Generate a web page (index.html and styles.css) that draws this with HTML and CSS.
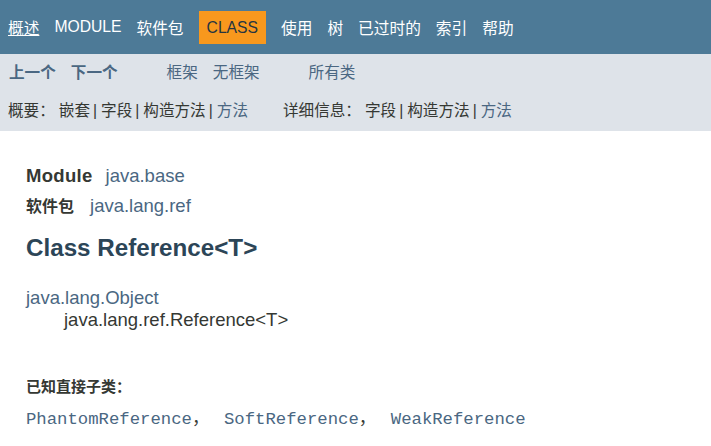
FILE: index.html
```html
<!DOCTYPE html>
<html lang="zh-CN">
<head>
<meta charset="utf-8">
<title>Reference (Java SE 10 &amp; JDK 10 )</title>
<link rel="stylesheet" href="styles.css">
</head>
<body>
<header class="top-nav">
  <ul class="nav-list">
    <li><a class="under" href="#">概述</a></li>
    <li><a href="#">MODULE</a></li>
    <li><a href="#">软件包</a></li>
    <li class="current">CLASS</li>
    <li><a href="#">使用</a></li>
    <li><a href="#">树</a></li>
    <li><a href="#">已过时的</a></li>
    <li><a href="#">索引</a></li>
    <li><a href="#">帮助</a></li>
  </ul>
</header>
<div class="sub-nav">
  <div class="sub-row row-one">
    <ul class="group prev-next">
      <li>上一个</li>
      <li>下一个</li>
    </ul>
    <ul class="group frames">
      <li><a href="#">框架</a></li>
      <li><a href="#">无框架</a></li>
    </ul>
    <ul class="group all-classes">
      <li><a href="#">所有类</a></li>
    </ul>
  </div>
  <div class="sub-row row-two">
    <ul class="sub-list summary">
      <li class="lead">概要：</li>
      <li>嵌套<span class="bar">|</span></li>
      <li>字段<span class="bar">|</span></li>
      <li>构造方法<span class="bar">|</span></li>
      <li><a href="#">方法</a></li>
    </ul>
    <ul class="sub-list detail">
      <li class="lead">详细信息：</li>
      <li>字段<span class="bar">|</span></li>
      <li>构造方法<span class="bar">|</span></li>
      <li><a href="#">方法</a></li>
    </ul>
  </div>
</div>
<main class="content">
  <div class="sub-title"><span class="label spaced">Module</span><a href="#">java.base</a></div>
  <div class="sub-title"><span class="label cjk">软件包</span><a href="#">java.lang.ref</a></div>
  <h2 class="title">Class Reference&lt;T&gt;</h2>
  <div class="inheritance">
    <a href="#">java.lang.Object</a>
    <div class="inherit-child">java.lang.ref.Reference&lt;T&gt;</div>
  </div>
  <dl class="subclasses">
    <dt>已知直接子类：</dt>
    <dd><code><a href="#">PhantomReference</a><span class="sep">，</span><a href="#">SoftReference</a><span class="sep">，</span><a href="#">WeakReference</a></code></dd>
  </dl>
</main>
</body>
</html>
```
FILE: styles.css
```css
body {
  margin: 0;
  font-family: "Liberation Sans", "Noto Sans CJK SC", sans-serif;
  color: #353833;
  background: #ffffff;
}

a {
  color: #4a6782;
  text-decoration: none;
}

ul {
  list-style: none;
  margin: 0;
  padding: 0;
}

/* top navigation */
.top-nav {
  background: #4d7a97;
  height: 54px;
  display: flex;
  align-items: center;
  padding-left: 8px;
  font-size: 15.7px;
}

.nav-list {
  display: flex;
  align-items: center;
  gap: 15px;
}

.nav-list a {
  color: #ffffff;
}

.nav-list a.under {
  text-decoration: underline;
}

.nav-list .current {
  background: #f8981d;
  color: #253441;
  padding: 7px 8px;
  line-height: 19px;
}

/* sub navigation */
.sub-nav {
  background: #dee3e9;
  padding: 7px 0 8px;
  font-size: 15.6px;
}

.sub-row {
  display: flex;
  align-items: center;
  height: 24px;
  line-height: 24px;
}

.row-one {
  padding-left: 9px;
}

.group {
  display: flex;
  gap: 15px;
}

.prev-next {
  color: #4a6782;
  font-weight: bold;
}

.frames,
.all-classes {
  margin-left: 49px;
}

.row-two {
  margin-top: 14px;
  padding-left: 8px;
}

.sub-list {
  display: flex;
}

.sub-list .lead {
  margin-right: 4px;
}

.bar {
  display: inline-block;
  margin: 0 4px 0 3px;
}

.detail {
  margin-left: 35px;
}

/* content */
.content {
  padding: 30px 26px 0;
}

.sub-title {
  display: flex;
  align-items: baseline;
  gap: 13px;
  font-size: 18.5px;
  line-height: 30px;
}

.label {
  font-weight: bold;
}

.label.spaced {
  letter-spacing: 0.3px;
}

.label.cjk {
  font-size: 16px;
  margin-right: 3px;
}

.title {
  margin: 11px 0 0;
  font-size: 24.2px;
  line-height: 30px;
  color: #2c4557;
}

.inheritance {
  margin-top: 24px;
  font-size: 18.5px;
  line-height: 22px;
}

.inherit-child {
  padding-left: 38px;
}

.subclasses {
  margin: 45px 0 0;
}

.subclasses dt {
  font-size: 15px;
  font-weight: bold;
  line-height: 22px;
}

.subclasses dd {
  margin: 10px 0 0;
  line-height: 22px;
}

.subclasses code {
  font-family: "Liberation Mono", "Noto Sans CJK SC", monospace;
  font-size: 17.3px;
}

.subclasses .sep {
  display: inline-block;
  width: 32px;
}
```
